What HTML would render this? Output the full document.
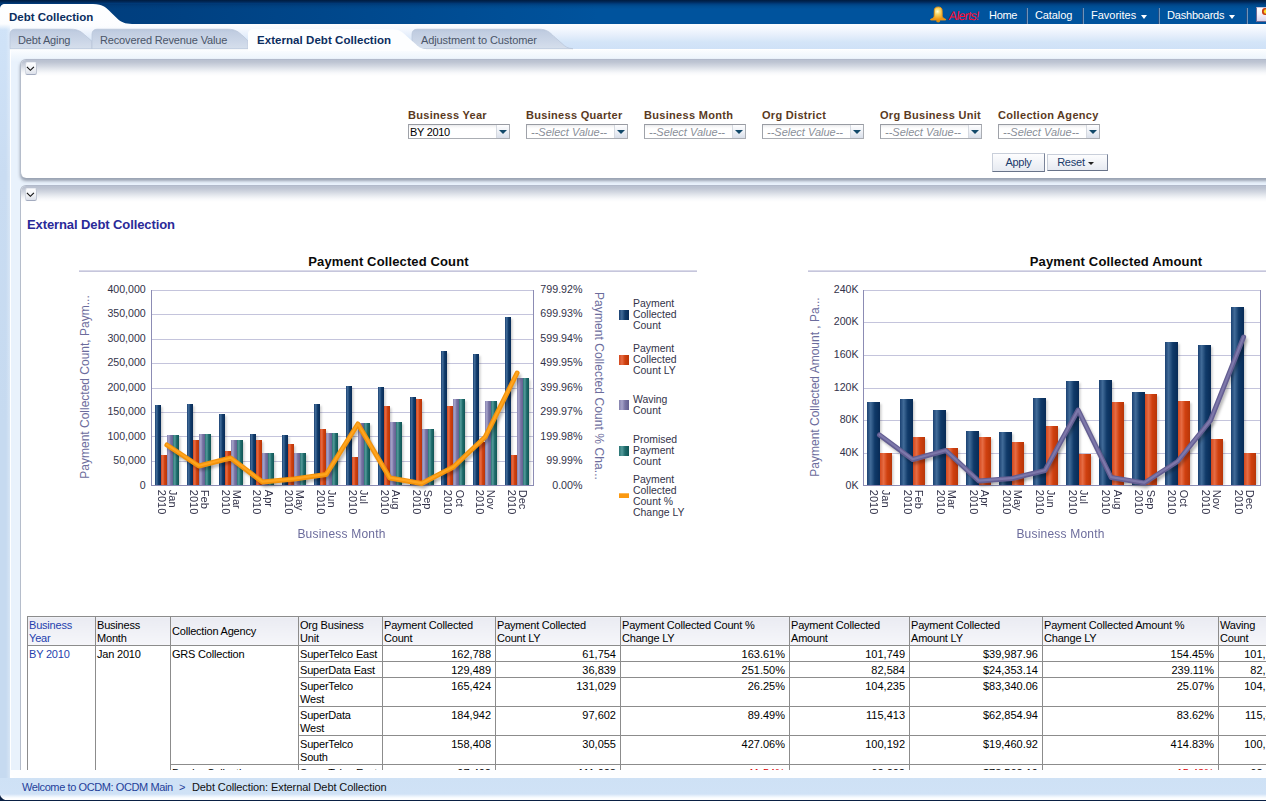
<!DOCTYPE html>
<html><head><meta charset="utf-8"><title>Debt Collection</title>
<style>
*{box-sizing:border-box}
html,body{margin:0;padding:0}
body{width:1266px;height:801px;overflow:hidden;position:relative;background:#fff;font-family:"Liberation Sans",sans-serif;font-size:11px;color:#000}
.abs{position:absolute}
#hdr{left:0;top:0;width:1266px;height:24px;background:linear-gradient(#001c40 0px,#00295b 2px,#003f80 4px,#004c90 6px,#00539d 9px,#00539d 24px)}
#tabbar{left:0;top:24px;width:1266px;height:25px;background:linear-gradient(#fcfdff 0,#f4f8fe 5px,#e6effb 11px,#d4e5f8 18px,#cfe1f7 25px)}
#leftb{left:0;top:24px;width:10px;height:776px;background:linear-gradient(90deg,rgba(255,255,255,0) 6px,rgba(255,255,255,0.3) 10px),linear-gradient(#d0e3f8 0,#c9dcf2 150px,#c6daf0 400px)}
#content{left:10px;top:49px;width:1256px;height:729px;background:#fff;border-bottom-left-radius:7px}
#gutter{left:11px;top:50px;width:1255px;height:720px;background:linear-gradient(#fbfdff 0,#f1f7fd 6px,#e9f2fc 12px)}
#botbar{left:0;top:778px;width:1266px;height:22px;background:linear-gradient(#cee1f5 0,#d0e2f6 16px,#e8f1fb 18px,#fbfdff 20px,#fff 22px)}
#botdark{left:0;top:800px;width:1266px;height:1px;background:#0a2044}
.panel{background:#fff;border-left:1px solid #b5bdcb;border-top:1px solid #b2bacb;border-top-left-radius:6px}
.pshadow{position:absolute;left:0;top:0;right:0;height:16px;border-top-left-radius:5px;background:linear-gradient(#b9c1d0 0,#bdc4d2 2px,#d2d7e1 6px,#e9ecf1 10px,#f8f9fb 13px,#fff 16px)}
.cbtn{width:12.5px;height:13px;border:1px solid #d3d8e2;border-top-color:#e9ecf2;border-bottom-color:#a3abbf;border-right-color:#c0c6d3;border-radius:2.5px;background:linear-gradient(#fdfdfe,#f1f3f7 50%,#dde1ea)}
.hl{color:#fff;font-size:11px;top:9px;white-space:nowrap}
.hsep{top:8px;width:2px;height:16px;background:linear-gradient(90deg,#1f4e86 50%,#6f93b9 50%)}
.tab{top:29px;height:20px;font-size:11px;color:#4a5568;white-space:nowrap}
.lbl{font-weight:bold;font-size:11px;color:#5a3a1e;white-space:nowrap;letter-spacing:0.3px}
.sel{height:15px;width:102px;letter-spacing:-0.3px;border:1px solid #aaadb3;border-top-color:#989ba2;border-left-color:#9fa2a9;background:linear-gradient(#e9eaec 0,#f8f8f9 2px,#fff 4px);font-size:11px;line-height:13px;white-space:nowrap;overflow:hidden;padding-left:1px;padding-top:1px}
.sel i{color:#8a8f99;padding-left:3px;letter-spacing:0}
.sel .arr{position:absolute;right:0;top:0;width:13px;height:13px;background:linear-gradient(#fdfdfe,#eef1f6 50%,#d9dfea);border-left:1px solid #d5d9e0}
.sel .arr:after{content:"";position:absolute;left:2px;top:4.5px;border:4px solid transparent;border-top:4px solid #12496a;border-bottom:0}
.btn{height:17px;border:1px solid #c9cfda;border-bottom-color:#687389;border-right-color:#7a8499;background:linear-gradient(#fdfdfe,#e6eaf1);font-size:11px;color:#1a3a6a;text-align:center;line-height:15px;white-space:nowrap}
table.t{border-collapse:collapse;font-size:11px;position:absolute;left:27px;top:616px;table-layout:fixed;width:1261px}
table.t td,table.t th{border:1px solid #8c8c8c;padding:2px 2px 0 1px;vertical-align:top;font-weight:normal;text-align:left;line-height:13px;overflow:hidden;white-space:nowrap;letter-spacing:-0.2px}
table.t th{background:linear-gradient(#eaebf2,#f1f2f7 60%,#f6f6fa);vertical-align:middle;white-space:normal;line-height:13px;padding-top:1px;padding-bottom:0;padding-left:1px}
table.t td.n{text-align:right;padding-right:4px;letter-spacing:0}
</style></head><body>
<div id="hdr" class="abs"></div>
<div id="tabbar" class="abs"></div>
<div id="leftb" class="abs"></div>
<div id="content" class="abs"></div>
<div id="gutter" class="abs"></div>
<div class="abs" style="left:0;top:4px;width:620px;height:20px;background:linear-gradient(90deg,rgba(0,40,95,0.55) 0,rgba(0,45,100,0.5) 160px,rgba(0,60,120,0) 600px)"></div>
<svg class="abs" style="left:0;top:0" width="140" height="30" viewBox="0 0 140 30">
<defs><linearGradient id="ttg" x1="0" y1="0" x2="0" y2="30" gradientUnits="userSpaceOnUse"><stop offset="0" stop-color="#ffffff"/><stop offset="0.800" stop-color="#fcfdff"/><stop offset="1" stop-color="#fcfdff" stop-opacity="0"/></linearGradient></defs>
<path d="M0,9 C0,5.500 2,4 5,4 L93,4 C103,4 106.500,8 111,12.500 L117.500,18.800 C121,22 125,24 132,24 L140,24 L140,30 L0,30 Z" fill="url(#ttg)"/>
</svg>
<div class="abs" style="left:9px;top:11px;font-weight:bold;font-size:11.500px;color:#0b2d5e;white-space:nowrap">Debt Collection</div>
<svg class="abs" style="left:928px;top:5px" width="20" height="19" viewBox="928 5 20 19">
<defs><radialGradient id="bg" cx="937.500" cy="11.500" r="8" gradientUnits="userSpaceOnUse"><stop offset="0" stop-color="#ffffd2"/><stop offset="0.350" stop-color="#f9d768"/><stop offset="0.750" stop-color="#f3b030"/><stop offset="1" stop-color="#ee9414"/></radialGradient></defs>
<ellipse cx="938.200" cy="21" rx="2" ry="1.400" fill="#d98e0e"/>
<path d="M938.200,7 C935.600,7 934.300,8.200 934.300,10.500 L934.200,15.500 C934.200,17.300 933.200,18.500 930.600,19.300 L930.600,20 L945.700,20 L945.700,19.300 C943.100,18.500 942.200,17.300 942.200,15.500 L942.100,10.500 C942.100,8.200 940.800,7 938.200,7 Z" fill="url(#bg)" stroke="#ef9612" stroke-width="0.900"/>
</svg>
<div class="abs hl" style="left:947.500px;color:#ff0a32;letter-spacing:-0.800px;top:8.500px;font-size:12.500px;transform:skewX(-7deg);transform-origin:0 100%">Alerts!</div>
<div class="abs hl" style="left:989px;letter-spacing:-0.300px">Home</div>
<div class="abs hsep" style="left:1026px"></div>
<div class="abs hl" style="left:1035px;letter-spacing:-0.100px">Catalog</div>
<div class="abs hsep" style="left:1082px"></div>
<div class="abs hl" style="left:1091px">Favorites</div>
<div class="abs" style="left:1140.500px;top:15px;border:3.900px solid transparent;border-top:4.200px solid #fff;border-bottom:0"></div>
<div class="abs hsep" style="left:1158px"></div>
<div class="abs hl" style="left:1167px;letter-spacing:-0.200px">Dashboards</div>
<div class="abs" style="left:1228.600px;top:15px;border:3.900px solid transparent;border-top:4.200px solid #fff;border-bottom:0"></div>
<div class="abs hsep" style="left:1246px"></div>
<div class="abs" style="left:1256px;top:7px;width:12px;height:15px;background:linear-gradient(#ffffff,#f3f0fa 50%,#d9d3ea);border:1px solid #6f6a92;border-top-color:#c8c4dc"></div>
<div class="abs" style="left:1262px;top:8px;width:6px;height:7px;background:radial-gradient(circle at 4px 3.500px,#ffe030 1.500px,#c83c14 2.800px);border-radius:3px"></div>

<svg class="abs" style="left:0;top:28px" width="600" height="23" viewBox="0 0 600 23">
<defs><linearGradient id="tg" x1="0" y1="0" x2="0" y2="1"><stop offset="0" stop-color="#b9c7dc"/><stop offset="0.15" stop-color="#c1cde1"/><stop offset="0.6" stop-color="#cbd6e7"/><stop offset="1" stop-color="#d6dfec"/></linearGradient></defs>
<path d="M10,20.700 L10,6 C10,3 12,1.200 15,1.200 L71,1.200 C79,1.200 82,4.500 86,8 L92,13.300 L92,20.700 Z" fill="url(#tg)" stroke="#b7c4d9" stroke-width="0.700"/>
<path d="M92,20.700 L92,6 C92,3 94,1.200 97,1.200 L228,1.200 C236,1.200 239,4.500 243,8 L248,12.800 L248,20.700 Z" fill="url(#tg)" stroke="#b7c4d9" stroke-width="0.700"/>
<path d="M412,20.700 L412,6 C412,3 414,1.200 417,1.200 L539,1.200 C547,1.200 550,4.500 554,8.500 L562,15.500 C565,18.500 568,20.700 573,20.700 Z" fill="url(#tg)" stroke="#b7c4d9" stroke-width="0.700"/>
<path d="M248,23 L248,5.500 C248,3 250,1.200 253,1.200 L392,1.200 C400,1.200 403,4.500 407,8.500 L415,15.500 C418,18.500 421,21 426,21 L426,23 Z" fill="#fdfeff"/>
</svg>
<div class="abs tab" style="left:18px;top:34px;letter-spacing:-0.150px">Debt Aging</div>
<div class="abs tab" style="left:100px;top:34px;letter-spacing:-0.150px">Recovered Revenue Value</div>
<div class="abs tab" style="left:257px;top:34px;font-weight:bold;font-size:11.500px;color:#0b2d5e;letter-spacing:0.050px">External Debt Collection</div>
<div class="abs tab" style="left:421px;top:34px;letter-spacing:-0.100px">Adjustment to Customer</div>

<div class="abs panel" style="left:20px;top:59px;width:1250px;height:119px;border-bottom-left-radius:6px;box-shadow:0 2.500px 3px rgba(140,148,165,0.85)">
<div class="pshadow"></div>
<div class="abs cbtn" style="left:3.500px;top:2px"></div>
<svg class="abs" style="left:5px;top:6px" width="9" height="6" viewBox="0 0 9 6"><path d="M0.900,0.900 L4.400,4.300 L7.900,0.900" fill="none" stroke="#111" stroke-width="1.150"/></svg>
</div>
<div class="abs lbl" style="left:408px;top:109px">Business Year</div>
<div class="abs lbl" style="left:526px;top:109px">Business Quarter</div>
<div class="abs lbl" style="left:644px;top:109px">Business Month</div>
<div class="abs lbl" style="left:762px;top:109px">Org District</div>
<div class="abs lbl" style="left:880px;top:109px">Org Business Unit</div>
<div class="abs lbl" style="left:998px;top:109px">Collection Agency</div>
<div class="abs sel" style="left:408px;top:124px">BY 2010<span class="arr"></span></div>
<div class="abs sel" style="left:526px;top:124px"><i>--Select Value--</i><span class="arr"></span></div>
<div class="abs sel" style="left:644px;top:124px"><i>--Select Value--</i><span class="arr"></span></div>
<div class="abs sel" style="left:762px;top:124px"><i>--Select Value--</i><span class="arr"></span></div>
<div class="abs sel" style="left:880px;top:124px"><i>--Select Value--</i><span class="arr"></span></div>
<div class="abs sel" style="left:998px;top:124px"><i>--Select Value--</i><span class="arr"></span></div>
<div class="abs btn" style="left:992px;top:153px;width:53px;height:19px;line-height:17px;letter-spacing:-0.3px">Apply</div>
<div class="abs btn" style="left:1047px;top:154px;width:61px;padding-right:13px;letter-spacing:-0.2px">Reset</div>
<div class="abs" style="left:1088px;top:162px;border:3.500px solid transparent;border-top:3.500px solid #222;border-bottom:0"></div>

<div class="abs panel" style="left:20px;top:185px;width:1250px;height:585px">
<div class="pshadow"></div>
<div class="abs cbtn" style="left:3.500px;top:2px"></div>
<svg class="abs" style="left:5px;top:6px" width="9" height="6" viewBox="0 0 9 6"><path d="M0.900,0.900 L4.400,4.300 L7.900,0.900" fill="none" stroke="#111" stroke-width="1.150"/></svg>
</div>
<div class="abs" style="left:27px;top:216.500px;font-weight:bold;font-size:13px;color:#2a2a98;white-space:nowrap;letter-spacing:-0.100px">External Debt Collection</div>
<svg class="abs" style="left:0;top:240px" width="720" height="320" viewBox="0 240 720 320" font-family="Liberation Sans, sans-serif"><defs>
<linearGradient id="gB" x1="0" x2="1" y1="0" y2="0"><stop offset="0" stop-color="#1a4172"/><stop offset="0.28" stop-color="#416b98"/><stop offset="0.6" stop-color="#103a69"/><stop offset="1" stop-color="#082b56"/></linearGradient>
<linearGradient id="gR" x1="0" x2="1" y1="0" y2="0"><stop offset="0" stop-color="#d4481c"/><stop offset="0.3" stop-color="#e66c44"/><stop offset="0.6" stop-color="#d0400f"/><stop offset="1" stop-color="#b83608"/></linearGradient>
<linearGradient id="gP" x1="0" x2="1" y1="0" y2="0"><stop offset="0" stop-color="#8582ae"/><stop offset="0.3" stop-color="#a6a3c9"/><stop offset="0.6" stop-color="#7975a5"/><stop offset="1" stop-color="#635f8f"/></linearGradient>
<linearGradient id="gT" x1="0" x2="1" y1="0" y2="0"><stop offset="0" stop-color="#2a7575"/><stop offset="0.3" stop-color="#559b9b"/><stop offset="0.6" stop-color="#1f6c6c"/><stop offset="1" stop-color="#115555"/></linearGradient>
<filter id="sh" x="-20%" y="-5%" width="160%" height="115%"><feGaussianBlur stdDeviation="1"/></filter>
<filter id="sh2" x="-5%" y="-20%" width="110%" height="140%"><feGaussianBlur stdDeviation="1.5"/></filter>
</defs><text x="388.500" y="266" font-size="13" font-weight="bold" letter-spacing="0.13" text-anchor="middle" fill="#0a0a0a">Payment Collected Count</text><rect x="79" y="270" width="618" height="1" fill="#d9d9e8"/><rect x="79" y="271" width="618" height="1" fill="#c6c6dc"/><line x1="151" y1="290.5" x2="533" y2="290.5" stroke="#c4c4dc" stroke-width="1"/><text x="145.700" y="292.8" font-size="10.600" text-anchor="end" fill="#33334a">400,000</text><line x1="151" y1="314.5" x2="533" y2="314.5" stroke="#c4c4dc" stroke-width="1"/><text x="145.700" y="317.3" font-size="10.600" text-anchor="end" fill="#33334a">350,000</text><line x1="151" y1="339.5" x2="533" y2="339.5" stroke="#c4c4dc" stroke-width="1"/><text x="145.700" y="341.8" font-size="10.600" text-anchor="end" fill="#33334a">300,000</text><line x1="151" y1="363.5" x2="533" y2="363.5" stroke="#c4c4dc" stroke-width="1"/><text x="145.700" y="366.2" font-size="10.600" text-anchor="end" fill="#33334a">250,000</text><line x1="151" y1="388.5" x2="533" y2="388.5" stroke="#c4c4dc" stroke-width="1"/><text x="145.700" y="390.7" font-size="10.600" text-anchor="end" fill="#33334a">200,000</text><line x1="151" y1="412.5" x2="533" y2="412.5" stroke="#c4c4dc" stroke-width="1"/><text x="145.700" y="415.2" font-size="10.600" text-anchor="end" fill="#33334a">150,000</text><line x1="151" y1="436.5" x2="533" y2="436.5" stroke="#c4c4dc" stroke-width="1"/><text x="145.700" y="439.7" font-size="10.600" text-anchor="end" fill="#33334a">100,000</text><line x1="151" y1="461.5" x2="533" y2="461.5" stroke="#c4c4dc" stroke-width="1"/><text x="145.700" y="464.2" font-size="10.600" text-anchor="end" fill="#33334a">50,000</text><line x1="151" y1="485.5" x2="533" y2="485.5" stroke="#c4c4dc" stroke-width="1"/><text x="145.700" y="488.6" font-size="10.600" text-anchor="end" fill="#33334a">0</text><text x="582.500" y="292.8" font-size="10.700" text-anchor="end" fill="#33334a">799.92%</text><text x="582.500" y="317.3" font-size="10.700" text-anchor="end" fill="#33334a">699.93%</text><text x="582.500" y="341.8" font-size="10.700" text-anchor="end" fill="#33334a">599.94%</text><text x="582.500" y="366.2" font-size="10.700" text-anchor="end" fill="#33334a">499.95%</text><text x="582.500" y="390.7" font-size="10.700" text-anchor="end" fill="#33334a">399.96%</text><text x="582.500" y="415.2" font-size="10.700" text-anchor="end" fill="#33334a">299.97%</text><text x="582.500" y="439.7" font-size="10.700" text-anchor="end" fill="#33334a">199.98%</text><text x="582.500" y="464.2" font-size="10.700" text-anchor="end" fill="#33334a">99.99%</text><text x="582.500" y="488.6" font-size="10.700" text-anchor="end" fill="#33334a">0.00%</text><g filter="url(#sh)"><rect x="157.5" y="407" width="5" height="78" fill="#000" opacity="0.2"/><rect x="163.5" y="457" width="5" height="28" fill="#000" opacity="0.2"/><rect x="169.5" y="437" width="5" height="48" fill="#000" opacity="0.2"/><rect x="175.5" y="437" width="5" height="48" fill="#000" opacity="0.2"/><rect x="189.5" y="406" width="5" height="79" fill="#000" opacity="0.2"/><rect x="195.5" y="442" width="5" height="43" fill="#000" opacity="0.2"/><rect x="201.5" y="436" width="5" height="49" fill="#000" opacity="0.2"/><rect x="207.5" y="436" width="5" height="49" fill="#000" opacity="0.2"/><rect x="221.5" y="416" width="5" height="69" fill="#000" opacity="0.2"/><rect x="227.5" y="453" width="5" height="32" fill="#000" opacity="0.2"/><rect x="233.5" y="442" width="5" height="43" fill="#000" opacity="0.2"/><rect x="239.5" y="442" width="5" height="43" fill="#000" opacity="0.2"/><rect x="252.5" y="436" width="5" height="49" fill="#000" opacity="0.2"/><rect x="258.5" y="442" width="5" height="43" fill="#000" opacity="0.2"/><rect x="264.5" y="455" width="5" height="30" fill="#000" opacity="0.2"/><rect x="270.5" y="455" width="5" height="30" fill="#000" opacity="0.2"/><rect x="284.5" y="437" width="5" height="48" fill="#000" opacity="0.2"/><rect x="290.5" y="446" width="5" height="39" fill="#000" opacity="0.2"/><rect x="296.5" y="455" width="5" height="30" fill="#000" opacity="0.2"/><rect x="302.5" y="455" width="5" height="30" fill="#000" opacity="0.2"/><rect x="316.5" y="406" width="5" height="79" fill="#000" opacity="0.2"/><rect x="322.5" y="431" width="5" height="54" fill="#000" opacity="0.2"/><rect x="328.5" y="435" width="5" height="50" fill="#000" opacity="0.2"/><rect x="334.5" y="435" width="5" height="50" fill="#000" opacity="0.2"/><rect x="348.5" y="388" width="5" height="97" fill="#000" opacity="0.2"/><rect x="354.5" y="459" width="5" height="26" fill="#000" opacity="0.2"/><rect x="360.5" y="425" width="5" height="60" fill="#000" opacity="0.2"/><rect x="366.5" y="425" width="5" height="60" fill="#000" opacity="0.2"/><rect x="380.5" y="389" width="5" height="96" fill="#000" opacity="0.2"/><rect x="386.5" y="408" width="5" height="77" fill="#000" opacity="0.2"/><rect x="392.5" y="424" width="5" height="61" fill="#000" opacity="0.2"/><rect x="398.5" y="424" width="5" height="61" fill="#000" opacity="0.2"/><rect x="412.5" y="399" width="5" height="86" fill="#000" opacity="0.2"/><rect x="418.5" y="401" width="5" height="84" fill="#000" opacity="0.2"/><rect x="424.5" y="431" width="5" height="54" fill="#000" opacity="0.2"/><rect x="430.5" y="431" width="5" height="54" fill="#000" opacity="0.2"/><rect x="443.5" y="353" width="5" height="132" fill="#000" opacity="0.2"/><rect x="449.5" y="408" width="5" height="77" fill="#000" opacity="0.2"/><rect x="455.5" y="401" width="5" height="84" fill="#000" opacity="0.2"/><rect x="461.5" y="401" width="5" height="84" fill="#000" opacity="0.2"/><rect x="475.5" y="356" width="5" height="129" fill="#000" opacity="0.2"/><rect x="481.5" y="444" width="5" height="41" fill="#000" opacity="0.2"/><rect x="487.5" y="403" width="5" height="82" fill="#000" opacity="0.2"/><rect x="493.5" y="403" width="5" height="82" fill="#000" opacity="0.2"/><rect x="507.5" y="319" width="5" height="166" fill="#000" opacity="0.2"/><rect x="513.5" y="457" width="5" height="28" fill="#000" opacity="0.2"/><rect x="519.5" y="380" width="5" height="105" fill="#000" opacity="0.2"/><rect x="525.5" y="380" width="5" height="105" fill="#000" opacity="0.2"/></g><rect x="155" y="405" width="6" height="80" fill="url(#gB)"/><rect x="161" y="455" width="6" height="30" fill="url(#gR)"/><rect x="167" y="435" width="6" height="50" fill="url(#gP)"/><rect x="173" y="435" width="6" height="50" fill="url(#gT)"/><rect x="187" y="404" width="6" height="81" fill="url(#gB)"/><rect x="193" y="440" width="6" height="45" fill="url(#gR)"/><rect x="199" y="434" width="6" height="51" fill="url(#gP)"/><rect x="205" y="434" width="6" height="51" fill="url(#gT)"/><rect x="219" y="414" width="6" height="71" fill="url(#gB)"/><rect x="225" y="451" width="6" height="34" fill="url(#gR)"/><rect x="231" y="440" width="6" height="45" fill="url(#gP)"/><rect x="237" y="440" width="6" height="45" fill="url(#gT)"/><rect x="250" y="434" width="6" height="51" fill="url(#gB)"/><rect x="256" y="440" width="6" height="45" fill="url(#gR)"/><rect x="262" y="453" width="6" height="32" fill="url(#gP)"/><rect x="268" y="453" width="6" height="32" fill="url(#gT)"/><rect x="282" y="435" width="6" height="50" fill="url(#gB)"/><rect x="288" y="444" width="6" height="41" fill="url(#gR)"/><rect x="294" y="453" width="6" height="32" fill="url(#gP)"/><rect x="300" y="453" width="6" height="32" fill="url(#gT)"/><rect x="314" y="404" width="6" height="81" fill="url(#gB)"/><rect x="320" y="429" width="6" height="56" fill="url(#gR)"/><rect x="326" y="433" width="6" height="52" fill="url(#gP)"/><rect x="332" y="433" width="6" height="52" fill="url(#gT)"/><rect x="346" y="386" width="6" height="99" fill="url(#gB)"/><rect x="352" y="457" width="6" height="28" fill="url(#gR)"/><rect x="358" y="423" width="6" height="62" fill="url(#gP)"/><rect x="364" y="423" width="6" height="62" fill="url(#gT)"/><rect x="378" y="387" width="6" height="98" fill="url(#gB)"/><rect x="384" y="406" width="6" height="79" fill="url(#gR)"/><rect x="390" y="422" width="6" height="63" fill="url(#gP)"/><rect x="396" y="422" width="6" height="63" fill="url(#gT)"/><rect x="410" y="397" width="6" height="88" fill="url(#gB)"/><rect x="416" y="399" width="6" height="86" fill="url(#gR)"/><rect x="422" y="429" width="6" height="56" fill="url(#gP)"/><rect x="428" y="429" width="6" height="56" fill="url(#gT)"/><rect x="441" y="351" width="6" height="134" fill="url(#gB)"/><rect x="447" y="406" width="6" height="79" fill="url(#gR)"/><rect x="453" y="399" width="6" height="86" fill="url(#gP)"/><rect x="459" y="399" width="6" height="86" fill="url(#gT)"/><rect x="473" y="354" width="6" height="131" fill="url(#gB)"/><rect x="479" y="442" width="6" height="43" fill="url(#gR)"/><rect x="485" y="401" width="6" height="84" fill="url(#gP)"/><rect x="491" y="401" width="6" height="84" fill="url(#gT)"/><rect x="505" y="317" width="6" height="168" fill="url(#gB)"/><rect x="511" y="455" width="6" height="30" fill="url(#gR)"/><rect x="517" y="378" width="6" height="107" fill="url(#gP)"/><rect x="523" y="378" width="6" height="107" fill="url(#gT)"/><line x1="151.5" y1="290" x2="151.5" y2="486" stroke="#8c8cb4"/><line x1="533.5" y1="290" x2="533.5" y2="486" stroke="#8c8cb4"/><line x1="151" y1="485.5" x2="534" y2="485.5" stroke="#8c8cb4"/><polyline points="168.9,448 200.8,469 232.6,461 264.4,485 296.2,482 328.1,477.5 359.9,427 391.8,481 423.6,486.5 455.4,470 487.2,440 519.1,376" fill="none" stroke="#000" stroke-opacity="0.3" stroke-width="4" stroke-linejoin="round" stroke-linecap="round" filter="url(#sh2)"/><polyline points="166.9,445 198.8,466 230.6,458 262.4,482 294.2,479 326.1,474.5 357.9,424 389.8,478 421.6,483.5 453.4,467 485.2,437 517.1,373" fill="none" stroke="#f3920a" stroke-width="5" stroke-linejoin="round" stroke-linecap="round"/><polyline points="166.9,444.7 198.8,465.7 230.6,457.7 262.4,481.7 294.2,478.7 326.1,474.2 357.9,423.7 389.8,477.7 421.6,483.2 453.4,466.7 485.2,436.7 517.1,372.7" fill="none" stroke="#ffa51f" stroke-width="2.2" stroke-linejoin="round" stroke-linecap="round"/><text transform="translate(169.1,489.8) rotate(90)" font-size="11" fill="#33334a">Jan</text><text transform="translate(157.8,489.8) rotate(90)" font-size="11" fill="#33334a">2010</text><text transform="translate(200.9,489.8) rotate(90)" font-size="11" fill="#33334a">Feb</text><text transform="translate(189.7,489.8) rotate(90)" font-size="11" fill="#33334a">2010</text><text transform="translate(232.8,489.8) rotate(90)" font-size="11" fill="#33334a">Mar</text><text transform="translate(221.5,489.8) rotate(90)" font-size="11" fill="#33334a">2010</text><text transform="translate(264.6,489.8) rotate(90)" font-size="11" fill="#33334a">Apr</text><text transform="translate(253.3,489.8) rotate(90)" font-size="11" fill="#33334a">2010</text><text transform="translate(296.4,489.8) rotate(90)" font-size="11" fill="#33334a">May</text><text transform="translate(285.1,489.8) rotate(90)" font-size="11" fill="#33334a">2010</text><text transform="translate(328.3,489.8) rotate(90)" font-size="11" fill="#33334a">Jun</text><text transform="translate(317.0,489.8) rotate(90)" font-size="11" fill="#33334a">2010</text><text transform="translate(360.1,489.8) rotate(90)" font-size="11" fill="#33334a">Jul</text><text transform="translate(348.8,489.8) rotate(90)" font-size="11" fill="#33334a">2010</text><text transform="translate(391.9,489.8) rotate(90)" font-size="11" fill="#33334a">Aug</text><text transform="translate(380.6,489.8) rotate(90)" font-size="11" fill="#33334a">2010</text><text transform="translate(423.8,489.8) rotate(90)" font-size="11" fill="#33334a">Sep</text><text transform="translate(412.5,489.8) rotate(90)" font-size="11" fill="#33334a">2010</text><text transform="translate(455.6,489.8) rotate(90)" font-size="11" fill="#33334a">Oct</text><text transform="translate(444.3,489.8) rotate(90)" font-size="11" fill="#33334a">2010</text><text transform="translate(487.4,489.8) rotate(90)" font-size="11" fill="#33334a">Nov</text><text transform="translate(476.1,489.8) rotate(90)" font-size="11" fill="#33334a">2010</text><text transform="translate(519.3,489.8) rotate(90)" font-size="11" fill="#33334a">Dec</text><text transform="translate(508.0,489.8) rotate(90)" font-size="11" fill="#33334a">2010</text><text x="341.500" y="537.500" font-size="12" letter-spacing="0.2" text-anchor="middle" fill="#6c6c9c">Business Month</text><text transform="translate(88.500,387) rotate(-90)" font-size="12" text-anchor="middle" fill="#6c6c9c">Payment Collected Count, Paym...</text><text transform="translate(594.500,292) rotate(90)" font-size="12" letter-spacing="0.08" fill="#6c6c9c">Payment Collected Count % Cha...</text><rect x="619" y="310" width="10" height="10" fill="url(#gB)"/><text x="633" y="307" font-size="10.450" fill="#33334a">Payment</text><text x="633" y="318" font-size="10.450" fill="#33334a">Collected</text><text x="633" y="329" font-size="10.450" fill="#33334a">Count</text><rect x="619" y="355" width="10" height="10" fill="url(#gR)"/><text x="633" y="352" font-size="10.450" fill="#33334a">Payment</text><text x="633" y="363" font-size="10.450" fill="#33334a">Collected</text><text x="633" y="374" font-size="10.450" fill="#33334a">Count LY</text><rect x="619" y="400" width="10" height="10" fill="url(#gP)"/><text x="633" y="403" font-size="10.450" fill="#33334a">Waving</text><text x="633" y="414" font-size="10.450" fill="#33334a">Count</text><rect x="619" y="446" width="10" height="10" fill="url(#gT)"/><text x="633" y="443" font-size="10.450" fill="#33334a">Promised</text><text x="633" y="454" font-size="10.450" fill="#33334a">Payment</text><text x="633" y="465" font-size="10.450" fill="#33334a">Count</text><rect x="619" y="493.3" width="10" height="4.7" fill="#fb9910"/><text x="633" y="483" font-size="10.450" fill="#33334a">Payment</text><text x="633" y="494" font-size="10.450" fill="#33334a">Collected</text><text x="633" y="505" font-size="10.450" fill="#33334a">Count %</text><text x="633" y="516" font-size="10.450" fill="#33334a">Change LY</text></svg>
<svg class="abs" style="left:780px;top:240px" width="486" height="320" viewBox="780 240 486 320" font-family="Liberation Sans, sans-serif"><text x="1116" y="266" font-size="13" font-weight="bold" letter-spacing="0.17" text-anchor="middle" fill="#0a0a0a">Payment Collected Amount</text><rect x="808" y="270" width="460" height="1" fill="#d9d9e8"/><rect x="808" y="271" width="460" height="1" fill="#c6c6dc"/><line x1="863" y1="290.5" x2="1260" y2="290.5" stroke="#c4c4dc" stroke-width="1"/><text x="858.500" y="292.8" font-size="10.600" text-anchor="end" fill="#33334a">240K</text><line x1="863" y1="322.5" x2="1260" y2="322.5" stroke="#c4c4dc" stroke-width="1"/><text x="858.500" y="325.4" font-size="10.600" text-anchor="end" fill="#33334a">200K</text><line x1="863" y1="355.5" x2="1260" y2="355.5" stroke="#c4c4dc" stroke-width="1"/><text x="858.500" y="358.1" font-size="10.600" text-anchor="end" fill="#33334a">160K</text><line x1="863" y1="388.5" x2="1260" y2="388.5" stroke="#c4c4dc" stroke-width="1"/><text x="858.500" y="390.7" font-size="10.600" text-anchor="end" fill="#33334a">120K</text><line x1="863" y1="420.5" x2="1260" y2="420.5" stroke="#c4c4dc" stroke-width="1"/><text x="858.500" y="423.4" font-size="10.600" text-anchor="end" fill="#33334a">80K</text><line x1="863" y1="453.5" x2="1260" y2="453.5" stroke="#c4c4dc" stroke-width="1"/><text x="858.500" y="456.0" font-size="10.600" text-anchor="end" fill="#33334a">40K</text><line x1="863" y1="485.5" x2="1260" y2="485.5" stroke="#c4c4dc" stroke-width="1"/><text x="858.500" y="488.6" font-size="10.600" text-anchor="end" fill="#33334a">0K</text><g filter="url(#sh)"><rect x="869.5" y="404" width="12" height="81" fill="#000" opacity="0.2"/><rect x="882.5" y="455" width="11" height="30" fill="#000" opacity="0.2"/><rect x="902.5" y="401" width="12" height="84" fill="#000" opacity="0.2"/><rect x="915.5" y="439" width="11" height="46" fill="#000" opacity="0.2"/><rect x="935.5" y="412" width="12" height="73" fill="#000" opacity="0.2"/><rect x="948.5" y="450" width="11" height="35" fill="#000" opacity="0.2"/><rect x="968.5" y="433" width="12" height="52" fill="#000" opacity="0.2"/><rect x="981.5" y="439" width="11" height="46" fill="#000" opacity="0.2"/><rect x="1001.5" y="434" width="12" height="51" fill="#000" opacity="0.2"/><rect x="1014.5" y="444" width="11" height="41" fill="#000" opacity="0.2"/><rect x="1035.5" y="400" width="12" height="85" fill="#000" opacity="0.2"/><rect x="1048.5" y="428" width="11" height="57" fill="#000" opacity="0.2"/><rect x="1068.5" y="383" width="12" height="102" fill="#000" opacity="0.2"/><rect x="1081.5" y="456" width="11" height="29" fill="#000" opacity="0.2"/><rect x="1101.5" y="382" width="12" height="103" fill="#000" opacity="0.2"/><rect x="1114.5" y="404" width="11" height="81" fill="#000" opacity="0.2"/><rect x="1134.5" y="394" width="12" height="91" fill="#000" opacity="0.2"/><rect x="1147.5" y="396" width="11" height="89" fill="#000" opacity="0.2"/><rect x="1167.5" y="344" width="12" height="141" fill="#000" opacity="0.2"/><rect x="1180.5" y="403" width="11" height="82" fill="#000" opacity="0.2"/><rect x="1200.5" y="347" width="12" height="138" fill="#000" opacity="0.2"/><rect x="1213.5" y="441" width="11" height="44" fill="#000" opacity="0.2"/><rect x="1233.5" y="309" width="12" height="176" fill="#000" opacity="0.2"/><rect x="1246.5" y="455" width="11" height="30" fill="#000" opacity="0.2"/></g><rect x="867" y="402" width="13" height="83" fill="url(#gB)"/><rect x="880" y="453" width="12" height="32" fill="url(#gR)"/><rect x="900" y="399" width="13" height="86" fill="url(#gB)"/><rect x="913" y="437" width="12" height="48" fill="url(#gR)"/><rect x="933" y="410" width="13" height="75" fill="url(#gB)"/><rect x="946" y="448" width="12" height="37" fill="url(#gR)"/><rect x="966" y="431" width="13" height="54" fill="url(#gB)"/><rect x="979" y="437" width="12" height="48" fill="url(#gR)"/><rect x="999" y="432" width="13" height="53" fill="url(#gB)"/><rect x="1012" y="442" width="12" height="43" fill="url(#gR)"/><rect x="1033" y="398" width="13" height="87" fill="url(#gB)"/><rect x="1046" y="426" width="12" height="59" fill="url(#gR)"/><rect x="1066" y="381" width="13" height="104" fill="url(#gB)"/><rect x="1079" y="454" width="12" height="31" fill="url(#gR)"/><rect x="1099" y="380" width="13" height="105" fill="url(#gB)"/><rect x="1112" y="402" width="12" height="83" fill="url(#gR)"/><rect x="1132" y="392" width="13" height="93" fill="url(#gB)"/><rect x="1145" y="394" width="12" height="91" fill="url(#gR)"/><rect x="1165" y="342" width="13" height="143" fill="url(#gB)"/><rect x="1178" y="401" width="12" height="84" fill="url(#gR)"/><rect x="1198" y="345" width="13" height="140" fill="url(#gB)"/><rect x="1211" y="439" width="12" height="46" fill="url(#gR)"/><rect x="1231" y="307" width="13" height="178" fill="url(#gB)"/><rect x="1244" y="453" width="12" height="32" fill="url(#gR)"/><line x1="863.5" y1="290" x2="863.5" y2="486" stroke="#8c8cb4"/><line x1="1260.5" y1="290" x2="1260.5" y2="486" stroke="#8c8cb4"/><line x1="863" y1="485.5" x2="1261" y2="485.5" stroke="#8c8cb4"/><polyline points="881.5,438 914.6,462.5 947.8,453.5 980.8,484 1013.9,481.5 1047.0,473.5 1080.1,413 1113.2,480.5 1146.3,486 1179.5,464.5 1212.5,423.5 1245.6,340" fill="none" stroke="#000" stroke-opacity="0.3" stroke-width="4" stroke-linejoin="round" stroke-linecap="round" filter="url(#sh2)"/><polyline points="879.5,435 912.6,459.5 945.8,450.5 978.8,481 1011.9,478.5 1045.0,470.5 1078.1,410 1111.2,477.5 1144.3,483 1177.5,461.5 1210.5,420.5 1243.6,337" fill="none" stroke="#645e92" stroke-width="5" stroke-linejoin="round" stroke-linecap="round"/><polyline points="879.5,434.7 912.6,459.2 945.8,450.2 978.8,480.7 1011.9,478.2 1045.0,470.2 1078.1,409.7 1111.2,477.2 1144.3,482.7 1177.5,461.2 1210.5,420.2 1243.6,336.7" fill="none" stroke="#7d78aa" stroke-width="2.2" stroke-linejoin="round" stroke-linecap="round"/><text transform="translate(881.8,489.8) rotate(90)" font-size="11" fill="#33334a">Jan</text><text transform="translate(870.4,489.8) rotate(90)" font-size="11" fill="#33334a">2010</text><text transform="translate(914.9,489.8) rotate(90)" font-size="11" fill="#33334a">Feb</text><text transform="translate(903.5,489.8) rotate(90)" font-size="11" fill="#33334a">2010</text><text transform="translate(948.0,489.8) rotate(90)" font-size="11" fill="#33334a">Mar</text><text transform="translate(936.6,489.8) rotate(90)" font-size="11" fill="#33334a">2010</text><text transform="translate(981.0,489.8) rotate(90)" font-size="11" fill="#33334a">Apr</text><text transform="translate(969.7,489.8) rotate(90)" font-size="11" fill="#33334a">2010</text><text transform="translate(1014.1,489.8) rotate(90)" font-size="11" fill="#33334a">May</text><text transform="translate(1002.8,489.8) rotate(90)" font-size="11" fill="#33334a">2010</text><text transform="translate(1047.2,489.8) rotate(90)" font-size="11" fill="#33334a">Jun</text><text transform="translate(1036.0,489.8) rotate(90)" font-size="11" fill="#33334a">2010</text><text transform="translate(1080.3,489.8) rotate(90)" font-size="11" fill="#33334a">Jul</text><text transform="translate(1069.0,489.8) rotate(90)" font-size="11" fill="#33334a">2010</text><text transform="translate(1113.5,489.8) rotate(90)" font-size="11" fill="#33334a">Aug</text><text transform="translate(1102.2,489.8) rotate(90)" font-size="11" fill="#33334a">2010</text><text transform="translate(1146.5,489.8) rotate(90)" font-size="11" fill="#33334a">Sep</text><text transform="translate(1135.2,489.8) rotate(90)" font-size="11" fill="#33334a">2010</text><text transform="translate(1179.7,489.8) rotate(90)" font-size="11" fill="#33334a">Oct</text><text transform="translate(1168.4,489.8) rotate(90)" font-size="11" fill="#33334a">2010</text><text transform="translate(1212.8,489.8) rotate(90)" font-size="11" fill="#33334a">Nov</text><text transform="translate(1201.5,489.8) rotate(90)" font-size="11" fill="#33334a">2010</text><text transform="translate(1245.8,489.8) rotate(90)" font-size="11" fill="#33334a">Dec</text><text transform="translate(1234.5,489.8) rotate(90)" font-size="11" fill="#33334a">2010</text><text x="1060.500" y="537.500" font-size="12" letter-spacing="0.2" text-anchor="middle" fill="#6c6c9c">Business Month</text><text transform="translate(818.500,387) rotate(-90)" font-size="12" text-anchor="middle" fill="#6c6c9c">Payment Collected Amount , Pa...</text></svg>
<table class="t">
<colgroup><col style="width:68px"><col style="width:75px"><col style="width:128px"><col style="width:84px"><col style="width:113px"><col style="width:125px"><col style="width:169px"><col style="width:120px"><col style="width:133px"><col style="width:176px"><col style="width:70px"></colgroup>
<tr style="height:29px"><th style="color:#1f3fae">Business<br>Year</th><th>Business<br>Month</th><th>Collection Agency</th><th>Org Business<br>Unit</th><th>Payment Collected<br>Count</th><th>Payment Collected<br>Count LY</th><th>Payment Collected Count %<br>Change LY</th><th>Payment Collected<br>Amount</th><th>Payment Collected<br>Amount LY</th><th>Payment Collected Amount %<br>Change LY</th><th>Waving<br>Count</th></tr>
<tr style="height:16px"><td rowspan="6" style="color:#1f3fae">BY 2010</td><td rowspan="6">Jan 2010</td><td rowspan="5">GRS Collection</td><td>SuperTelco East</td><td class="n">162,788</td><td class="n">61,754</td><td class="n">163.61%</td><td class="n">101,749</td><td class="n">$39,987.96</td><td class="n">154.45%</td><td class="n w">101,749</td></tr>
<tr style="height:16px"><td>SuperData East</td><td class="n">129,489</td><td class="n">36,839</td><td class="n">251.50%</td><td class="n">82,584</td><td class="n">$24,353.14</td><td class="n">239.11%</td><td class="n w">82,584</td></tr>
<tr style="height:29px"><td>SuperTelco<br>West</td><td class="n">165,424</td><td class="n">131,029</td><td class="n">26.25%</td><td class="n">104,235</td><td class="n">$83,340.06</td><td class="n">25.07%</td><td class="n w">104,235</td></tr>
<tr style="height:29px"><td>SuperData<br>West</td><td class="n">184,942</td><td class="n">97,602</td><td class="n">89.49%</td><td class="n">115,413</td><td class="n">$62,854.94</td><td class="n">83.62%</td><td class="n w">115,413</td></tr>
<tr style="height:29px"><td>SuperTelco<br>South</td><td class="n">158,408</td><td class="n">30,055</td><td class="n">427.06%</td><td class="n">100,192</td><td class="n">$19,460.92</td><td class="n">414.83%</td><td class="n w">100,192</td></tr>
<tr style="height:16px"><td>Border Collection</td><td>SuperTelco East</td><td class="n">97,402</td><td class="n">111,028</td><td class="n" style="color:#e00000">-11.54%</td><td class="n">62,202</td><td class="n">$73,562.19</td><td class="n" style="color:#e00000">-15.43%</td><td class="n w">62,202</td></tr>
</table>


<div class="abs" style="left:10px;top:770px;width:1256px;height:8px;background:#fdfeff;border-bottom-left-radius:7px"></div>
<div id="botbar" class="abs"></div>
<div id="botdark" class="abs"></div>
<div class="abs" style="left:0;top:792px;width:8px;height:9px;background:radial-gradient(circle at 8px 0,rgba(10,32,68,0) 8px,#0a2044 9px)"></div>
<div class="abs" style="left:22px;top:781px;font-size:11px;color:#1f3f9a;white-space:nowrap;letter-spacing:-0.400px">Welcome to OCDM: OCDM Main</div>
<div class="abs" style="left:179px;top:781px;font-size:11px;color:#1f3f9a;white-space:nowrap">&gt;</div>
<div class="abs" style="left:192px;top:781px;font-size:11px;color:#111;white-space:nowrap;letter-spacing:-0.100px">Debt Collection: External Debt Collection</div>

</body></html>
